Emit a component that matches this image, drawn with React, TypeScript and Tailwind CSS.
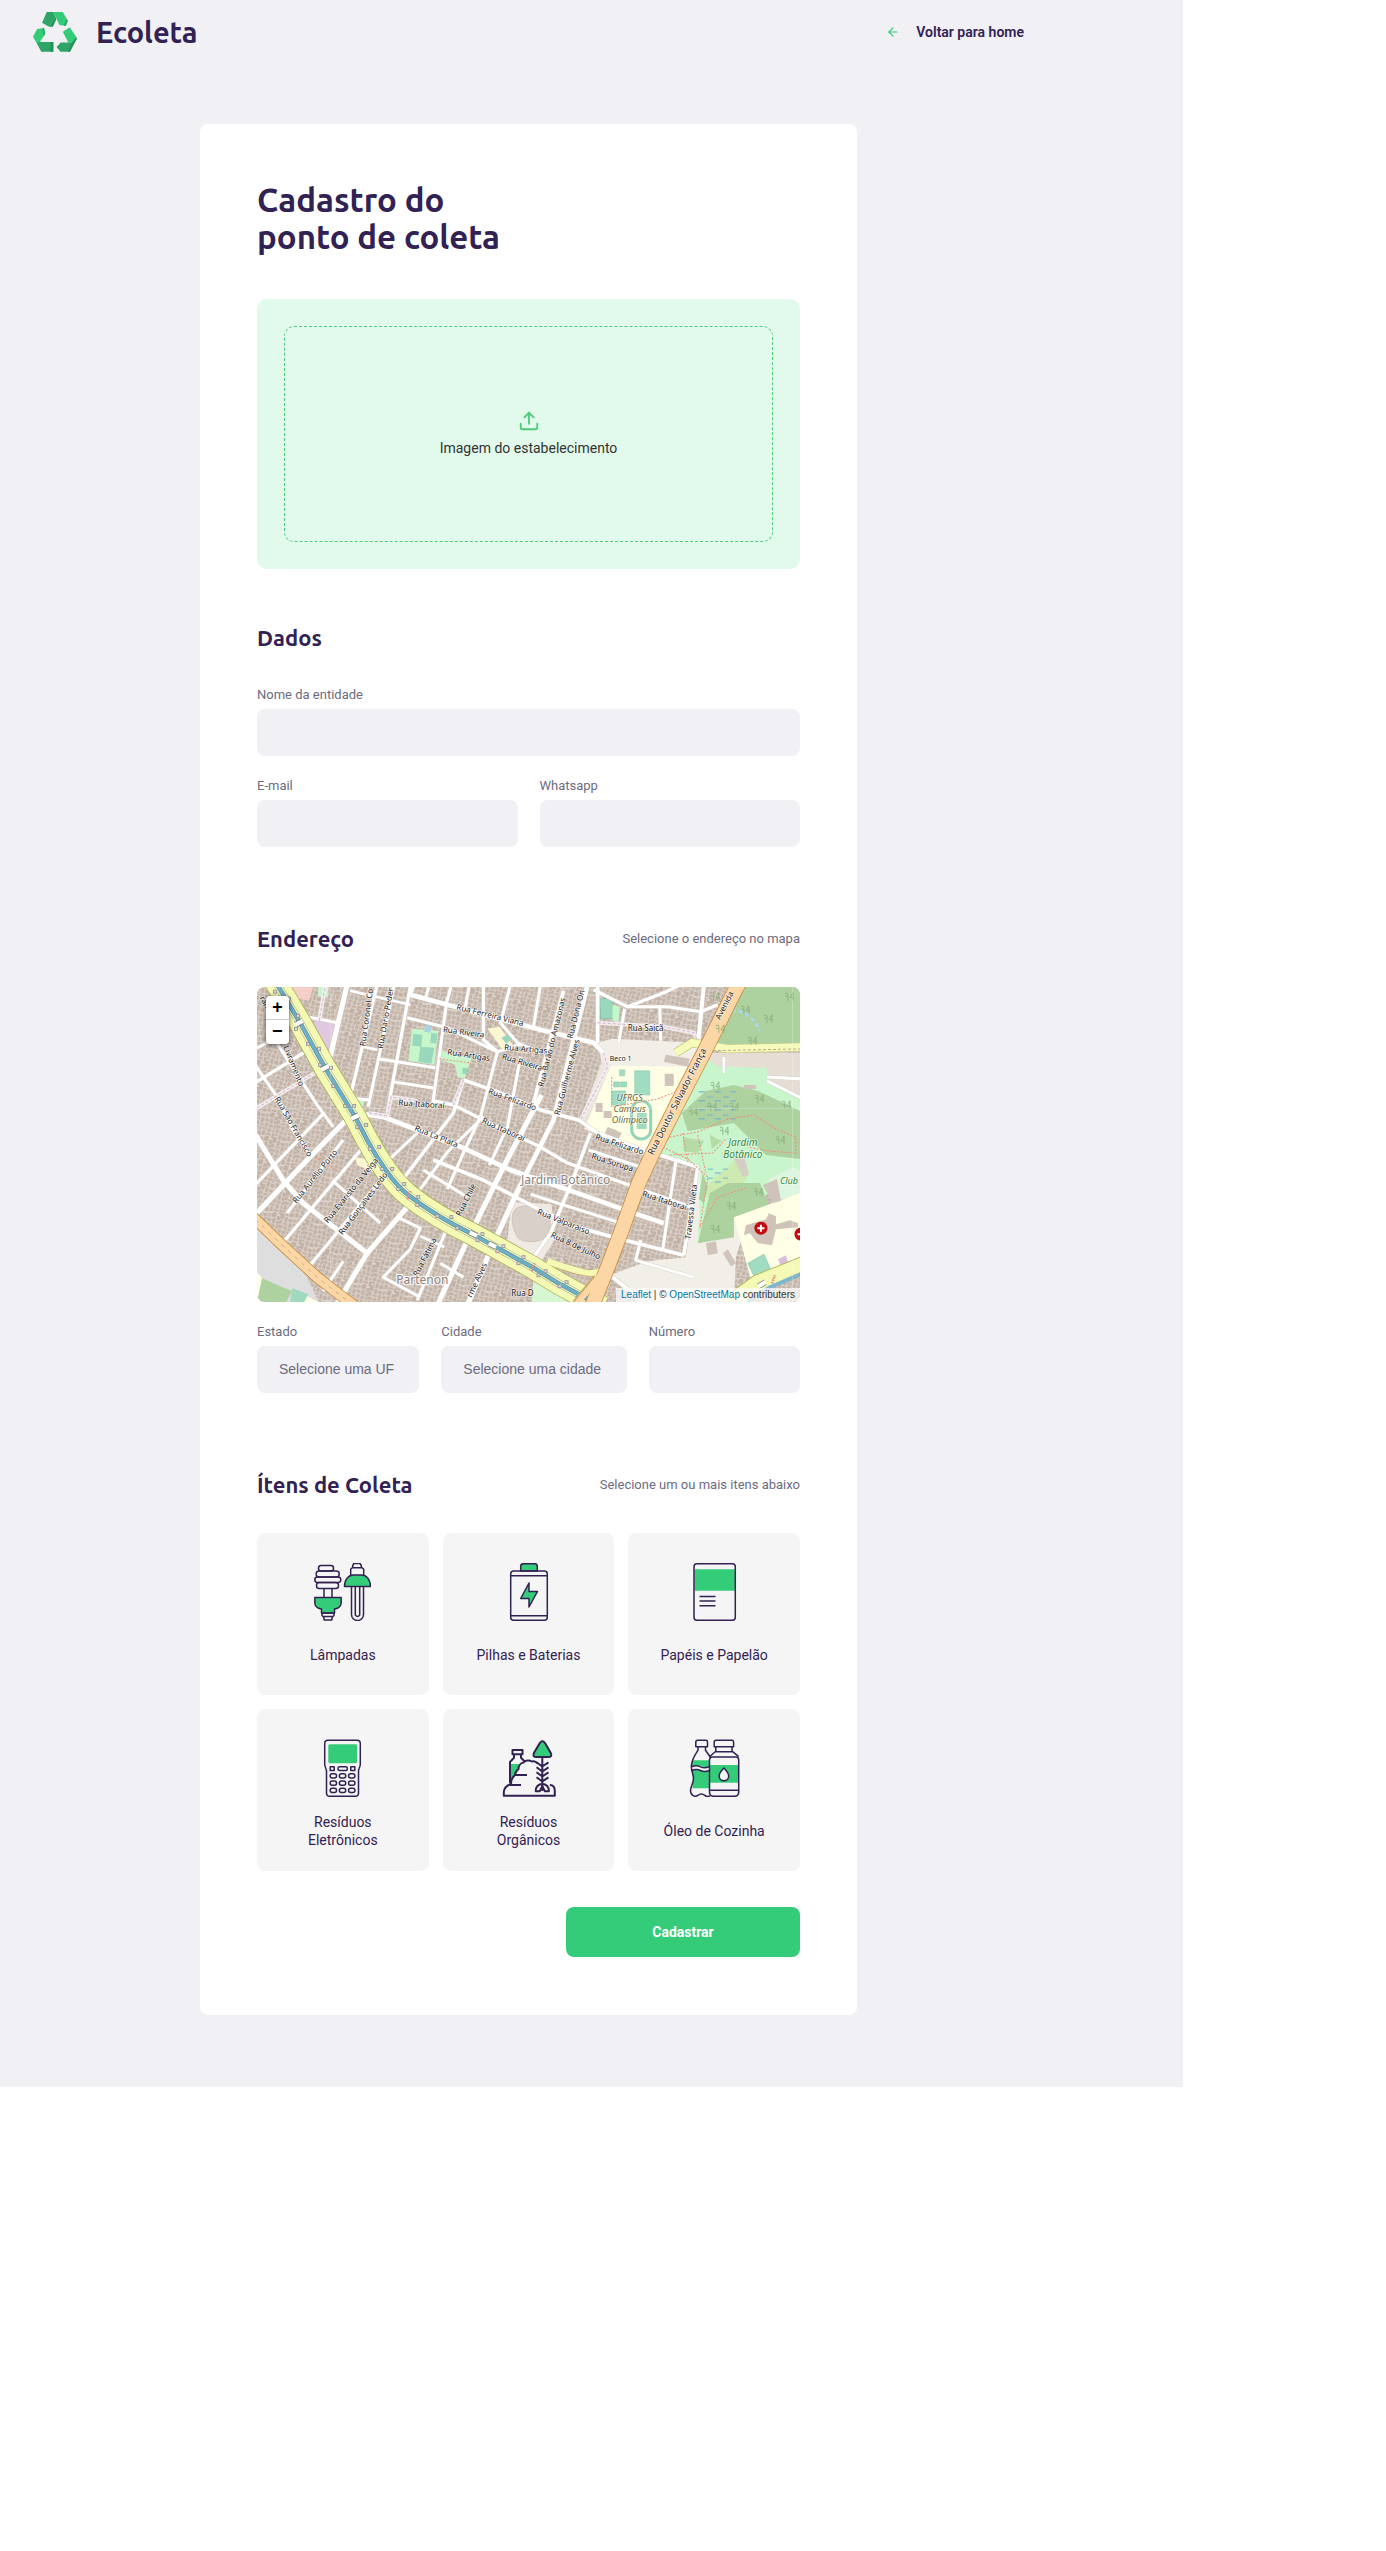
import React from "react";
import { FiArrowLeft, FiUpload } from "react-icons/fi";

const INK = "#322153";
const GREEN = "#34cb79";

function Logo() {
  return (
    <div className="flex items-center gap-[19px]">
      <svg viewBox="0 0 44 40" className="h-10 w-11" aria-hidden="true">
        <path d="M13.7 0H20l2.6 4.7L16 14.7l-6.9-4z" fill="#2ca566" />
        <path d="M20 14.7 16 14.7l6.6-10 .8 2.2z" fill="#249355" />
        <path d="M19.8 0h10l5 8.7-2.2 5.3-6.2-1-3.8-8.3z" fill={GREEN} />
        <path d="M34.8 8.7 32.6 14l-1.6-.3 2.6-6.9z" fill="#2ca566" />
        <path d="m29.8 19.7 7-4.4 6.7 10L38.2 34 35 30z" fill={GREEN} />
        <path d="m23.6 35 4-4.6H35l3.2 1.2 5.3-6.3v2l-6.6 12.4h-9.4z" fill="#2ca566" />
        <path d="m38.2 31.6 5.3-6.3v2l-6.6 12.4h-2z" fill="#249355" />
        <path d="m0 24.7 4.1-7.7 6.9-1 1.2 6-6.4 9.6-1.4 1z" fill={GREEN} />
        <path d="m11 16 1.2 6-1.5 2-1-8z" fill="#2ca566" />
        <path d="M5.3 30h15v9.7H8.3L4.4 32.6z" fill="#2ca566" />
        <path d="M17.3 30h3v9.7h-3z" fill="#249355" />
      </svg>
      <span className="font-[Ubuntu,'Noto_Sans',sans-serif] text-[29px] leading-8 font-bold">Ecoleta</span>
    </div>
  );
}

type Pt = string;

const streets: { d: Pt; w: number }[] = [
  { d: "M153 8 283 43 336 56 346 66", w: 4.5 },
  { d: "M90 -2 73 70", w: 5 },
  { d: "M120 -2 93 110", w: 3.2 },
  { d: "M153 0 136 93 130 126", w: 3.2 },
  { d: "M137 -2 111 120", w: 3 },
  { d: "M190 10 175 120", w: 3 },
  { d: "M93 4 153 18", w: 2.6 },
  { d: "M150 31 190 41 240 65", w: 3 },
  { d: "M106 60 120 63", w: 2.6 },
  { d: "M121 72 178 81", w: 3 },
  { d: "M136 95 176 101", w: 3 },
  { d: "M50 30 80 36", w: 3 },
  { d: "M85 110 112 113", w: 3 },
  { d: "M92 125 126 130 160 143 206 161 253 183 320 206 376 226 406 236", w: 4.6 },
  { d: "M176 114 196 118 226 133 283 160 310 176 385 203 436 221", w: 3.2 },
  { d: "M176 173 226 193 283 223 313 238 356 250 426 268", w: 3.6 },
  { d: "M206 93 240 105 283 123 321 133 340 146 386 163 440 180", w: 3.6 },
  { d: "M331 163 383 180", w: 3 },
  { d: "M273 207 300 216 370 238", w: 3 },
  { d: "M96 126 50 173 -2 228", w: 5 },
  { d: "M-2 147 26 193 46 216 110 266", w: 5 },
  { d: "M-2 78 20 110 36 143 53 168", w: 3 },
  { d: "M-2 96 48 65", w: 3.2 },
  { d: "M-2 62 30 46", w: 3 },
  { d: "M-2 198 66 127", w: 3.2 },
  { d: "M12 44 30 72 60 118 76 140", w: 3 },
  { d: "M30 226 86 153", w: 3 },
  { d: "M28 253 106 160", w: 3.2 },
  { d: "M53 278 126 190", w: 3.2 },
  { d: "M66 304 86 274", w: 3 },
  { d: "M80 316 110 266 150 220 160 208", w: 5 },
  { d: "M75 193 123 236", w: 3 },
  { d: "M126 178 160 146", w: 3 },
  { d: "M142 197 196 126 206 93", w: 3.4 },
  { d: "M160 206 190 165 226 130", w: 3 },
  { d: "M284 108 246 180 210 253 180 318", w: 5 },
  { d: "M262 200 236 256 210 318", w: 5 },
  { d: "M240 65 223 130 206 166 190 202", w: 3 },
  { d: "M263 70 250 140 232 178", w: 3 },
  { d: "M166 183 210 210", w: 3 },
  { d: "M140 230 163 241 153 262 126 290 163 310", w: 3 },
  { d: "M163 249 187 260", w: 2.6 },
  { d: "M190 240 160 313", w: 3 },
  { d: "M183 276 206 290", w: 3 },
  { d: "M172 -2 168 12", w: 3 },
  { d: "M212 -2 208 20", w: 3 },
  { d: "M194 -2 190 14", w: 3 },
  { d: "M226 -2V53L240 65 262 58", w: 3.2 },
  { d: "M253 -2 243 36 260 56 283 66", w: 3 },
  { d: "M153 8 156 -2", w: 4 },
  { d: "M306 4 276 116", w: 3.6 },
  { d: "M330 -2 296 133 262 200", w: 4.6 },
  { d: "M340 -2V56", w: 3.6 },
  { d: "M336 3 370 20 406 6 423 -2", w: 3.2 },
  { d: "M370 20 410 20 443 25 460 18", w: 3.2 },
  { d: "M446 -2 440 60", w: 4 },
  { d: "M367 22 361 56", w: 3 },
  { d: "M402 20 403 54", w: 3 },
  { d: "M283 -2 276 40", w: 3 },
  { d: "M333 146 315 193 293 246 276 270", w: 3.4 },
  { d: "M418 175 405 262", w: 3 },
  { d: "M440 180 426 268", w: 3.4 },
  { d: "M383 253 378 273 436 290", w: 3 },
  { d: "M350 286 383 312", w: 4 },
  { d: "M466 70V86", w: 3 },
  { d: "M509 90 542 92M509 94 545 112", w: 3 },
];

const footpaths: Pt[] = [
  "M340 36 406 40 436 46 443 60",
  "M346 66 350 80 323 133",
  "M0 121 66 81",
  "M62 34 68 0",
  "M112 126 130 129 134 110 160 114",
  "M206 93 196 118",
];

const redPaths: Pt[] = [
  "M354 90V120L400 112 420 104",
  "M398 166 412 150 440 145 470 132 496 128 518 142 538 150 538 166 510 164 490 160",
  "M405 160 430 172 450 190 442 240 460 210 490 200",
  "M425 146 430 175M412 168 455 166 468 152M440 148 448 186",
  "M182 72 213 76 208 92",
  "M58 170 80 184",
];

const roadNames: { t: string; x: number; y: number; r: number; s?: number }[] = [
  { t: "Rua Ferreira Viana", x: 232, y: 31, r: 14 },
  { t: "Rua Riveira", x: 206, y: 48, r: 8 },
  { t: "Rua Artigas", x: 211, y: 71, r: 9 },
  { t: "Rua Artigas", x: 268, y: 65, r: 5 },
  { t: "Rua Riveira", x: 264, y: 78, r: 17 },
  { t: "Rua Coronel Co", x: 112, y: 31, r: -82 },
  { t: "Rua Dario Peder", x: 131, y: 32, r: -80 },
  { t: "Rua Felizardo", x: 254, y: 115, r: 20 },
  { t: "Rua Itaboraí", x: 164, y: 120, r: 4 },
  { t: "Rua Itaboraí", x: 245, y: 145, r: 24 },
  { t: "Rua La Plata", x: 178, y: 152, r: 22 },
  { t: "a Livramento", x: 33, y: 77, r: 68 },
  { t: "rame", x: 7, y: 20, r: 62 },
  { t: "Rua São Francisco", x: 34, y: 141, r: 60 },
  { t: "Rua Aurélio Porto", x: 60, y: 191, r: -51 },
  { t: "Rua Evaristo da Veiga", x: 96, y: 205, r: -51 },
  { t: "Rua Gonçalves Ledo", x: 108, y: 218, r: -53 },
  { t: "Rua Chile", x: 211, y: 214, r: -63 },
  { t: "Rua Fátima", x: 170, y: 271, r: -63 },
  { t: "rme Alves", x: 222, y: 294, r: -65 },
  { t: "Rua D", x: 265, y: 309, r: 0 },
  { t: "Rua Barão do Amazonas", x: 297, y: 56, r: -76 },
  { t: "Rua Dona On", x: 321, y: 28, r: -76 },
  { t: "Rua Guilherme Alves", x: 312, y: 91, r: -75 },
  { t: "Rua Saicã", x: 388, y: 44, r: 0 },
  { t: "Beco 1", x: 363, y: 74, r: 0, s: 7 },
  { t: "Rua Doutor Salvador França", x: 422, y: 116, r: -63, s: 9 },
  { t: "Avenida", x: 469, y: 20, r: -63 },
  { t: "Rua Felizardo", x: 361, y: 160, r: 18 },
  { t: "Rua Surupa", x: 354, y: 178, r: 18 },
  { t: "Rua Itaboraí", x: 406, y: 216, r: 18 },
  { t: "Travessa Vileta", x: 436, y: 225, r: -83 },
  { t: "Rua Valparaíso", x: 305, y: 237, r: 22 },
  { t: "Rua 8 de Julho", x: 317, y: 261, r: 25 },
];

const canalNodes: [number, number][] = [
  [18, 5], [32, 12], [41, 29], [39, 42], [51, 57], [62, 62], [63, 78], [74, 81], [76, 99], [88, 119],
  [97, 119], [100, 140], [109, 138], [113, 162], [122, 160], [125, 182], [135, 182], [141, 202], [147, 197],
  [160, 218], [161, 210], [180, 229], [194, 230], [200, 241], [220, 253], [225, 247], [240, 264], [246, 259],
  [261, 276], [266, 270], [281, 288], [288, 284], [302, 299], [309, 295], [320, 311], [328, 306],
];

const trees: [number, number][] = [
  [457, 10], [487, 23], [510, 32], [531, 10], [494, 54], [462, 42], [457, 99], [435, 125], [454, 120], [476, 120],
  [501, 112], [528, 118], [466, 144], [522, 153], [473, 219], [457, 242], [500, 205],
];

const CANAL = "M14 -12 25 6 43 36 68 81 98 130 110 153C120 172 136 196 151 208 165 219 190 235 215 247L235 258 275 280 301 296 345 320";
const AVENUE = "M486 -12 478 2 461 36 446 66 420 116 395 166 381 196 363 246 350 280 334 320";

function StreetMap() {
  return (
    <svg viewBox="0 0 542 315" preserveAspectRatio="xMidYMid slice" className="block h-full w-full" role="img" aria-label="Mapa do bairro Jardim Botânico">
      <defs>
        <pattern id="roofs" width="26" height="24" patternUnits="userSpaceOnUse" patternTransform="rotate(14)">
          <rect width="26" height="24" fill="#ddd3ca" />
          <path
            d="M0 0h4v3H0zM5 0h3v5H5zM9 1h4v3H9zM14 0h2v4h-2zM17 0h5v3h-5zM23 1h3v4h-3zM0 4h3v4H0zM4 6h5v2H4zM10 5h3v5h-3zM14 5h4v3h-4zM19 4h3v5h-3zM23 6h3v3h-3zM0 9h5v3H0zM6 9h3v4H6zM10 11h4v2h-4zM15 9h3v4h-3zM19 10h4v3h-4zM24 10h2v4h-2zM1 13h3v4H1zM5 14h4v3H5zM10 14h2v4h-2zM13 14h5v2h-5zM19 14h3v4h-3zM23 15h3v2h-3zM0 18h4v2H0zM5 18h3v5H5zM9 19h4v4H9zM14 17h3v5h-3zM18 19h5v2h-5zM24 18h2v5h-2zM0 21h4v3H0zM18 22h4v2h-4z"
            fill="#c2b2a6"
          />
        </pattern>
        <pattern id="marsh" width="16" height="9" patternUnits="userSpaceOnUse">
          <path d="M1 2h6M9 6h6" stroke="#6aaed6" strokeWidth="1" />
        </pattern>
      </defs>
      <rect width="542" height="315" fill="url(#roofs)" />

      {/* open land, campuses and public areas */}
      <path d="M340 56 355 52 440 56 446 66 430 96 345 80z" fill="#f2efe9" />
      <path d="M323 133 345 72 356 80 340 146z" fill="#eae5dd" />
      <path d="m353 79 76 1-36 92-66-30z" fill="#ffffe5" />
      <path d="M440 180 500 200 478 270 476 315 380 315 352 288 390 274 428 270z" fill="#f2efe9" />
      <path d="M445 66H542V120H440z" fill="#e6ddd4" />
      <path d="m448 256 10-2 2 12-10 2zM470 262l8 14-5 3-8-13zM462 238l8-2 2 8-8 2z" fill="#d0c3ba" />
      <path d="M0 238 22 258 50 290 62 315H0z" fill="#dedede" />
      <path d="M0 285 10 296 8 315H0zM42 305 62 315H40z" fill="#ffffe5" />
      <path d="m5 291 30 13-6 11H0z" fill="#aed1a0" />
      <path d="m35 301 16 6-4 8H33z" fill="#9fd9c0" />
      <path d="M56 33 80 37 70 66 62 64z" fill="#e0c8de" />
      <path d="M22 0H56L52 14 30 10z" fill="#f6cfc9" />
      <path d="M61 0h10v10H61zM98 113h10l-3 8-8-3z" fill="#c5f7cb" />
      <path d="m155 42 26 2-4 34-26-4z" fill="#c5f7cb" />
      <path d="m156 47 9 1-1 12-9-1zM174 46l6 1-1 10-6-1zM163 60l14 1-3 16-13-2z" fill="#9ad8bd" />
      <path d="m168 38 6 1-1 7-6-1z" fill="#a6d4e4" />
      <path d="M184 64 214 72 208 92 200 90 198 78 183 73z" fill="#c5f7cb" />
      <path d="M205 81h7v6h-7z" fill="#9ad8bd" />
      <path d="M230 42 242 40 258 62 246 64z" fill="#fbf7d3" />
      <path d="m244 51 6-3 4 4-5 5z" fill="#9ad8bd" />
      <path d="M98 170 110 172 118 186 100 178z" fill="#fbf7d3" />
      <path d="m254 215 40 2 4 34-16 26-34-6z" fill="#efeae3" />
      <path d="M258 222c8-6 22-4 32 6 4 4 4 18-2 22-6 6-24 6-28 0-5-8-8-22-2-28z" fill="#d9d0c9" stroke="#c5b9af" strokeWidth=".6" />
      <path d="M342 12h13l2 20h-14z" fill="#9ad8bd" stroke="#6fb99b" strokeWidth=".6" />
      <path d="m355 18 7 2-1 15-6-1z" fill="#c5f7cb" />
      <path d="M276 293 283 290 312 315H274z" fill="#d7f7d3" />

      {/* parks */}
      <path d="M482 0H542V60H440L466 38z" fill="#aed1a0" />
      <path d="M444 68 460 80 509 81 509 94 542 112V196L515 202 500 216 440 256 443 182 396 166 420 118z" fill="#c8f5cb" />
      <path d="M448 104 476 98 500 104 542 124V172L508 168 476 136 430 144 424 126z" fill="#aed1a0" />
      <path d="M448 200 478 172 492 184 486 196 462 214 446 208z" fill="#cdebb0" />
      <path d="M452 206 470 196 502 196 512 220 476 230 476 250 440 256z" fill="#aed1a0" />
      <path d="M445 186 450 200 446 216 441 212z" fill="#aed1a0" />
      <path d="M425 150 446 154 440 166 426 164zM452 148 464 154 454 162z" fill="#b5dca5" />
      <rect x="440" y="104" width="38" height="32" fill="url(#marsh)" />
      <rect x="450" y="178" width="20" height="20" fill="url(#marsh)" />
      <path d="M476 172 486 168 491 188 485 190z" fill="#d6cdc6" />
      <path d="M510 192 536 180 542 184V208L516 214z" fill="#dcf6e0" />
      <path d="M476 230 542 206V278L494 296z" fill="#ffffe5" />
      <path d="m488 238 20-6 3-6 7 3v8l14-4 8 3v4l-22 2-4 16-14-2-8-10-6 2z" fill="#d0c3ba" />
      <path d="m490 276 16-9 8 18-16 8z" fill="#9fdcc2" stroke="#79c3a4" strokeWidth=".6" />
      <path d="m520 272 8-4 2 7-7 4z" fill="#d9bfdd" />
      <path d="M505 198l14-6 4 22-8 2zM486 98h12v4h-12z" fill="#cfc4bb" />

      {/* campus buildings */}
      <path d="M377 84h15v24h-15zM362 83h5v6h-5zM356 95h6v5h-6zM363 95h6v5h-6zM354 104h14v14h-14z" fill="#9fdcc2" stroke="#7cc7a8" strokeWidth=".5" />
      <rect x="374" y="114" width="19" height="38" rx="9.500" fill="none" stroke="#93d5ba" strokeWidth="3" />
      <rect x="379" y="126" width="10" height="16" fill="#9fdcc2" />
      <path d="M407 87h9v12h-9zM338 116h7v9h-7zM346 124h8v7h-8zM350 140l8 3-4 8-7-4zM408 68l24 4-2 8-24-5zM356 142l8 4-3 6-7-3z" fill="#d0c3ba" />

      {/* streets */}
      {streets.map((s, i) => (
        <path key={"c" + i} d={s.d} fill="none" stroke="#cfc9c3" strokeWidth={s.w + 0.8} strokeLinejoin="round" />
      ))}
      {streets.map((s, i) => (
        <path key={"s" + i} d={s.d} fill="none" stroke="#ffffff" strokeWidth={s.w} strokeLinejoin="round" />
      ))}
      {footpaths.map((d, i) => (
        <g key={i} fill="none">
          <path d={d} stroke="#f3edf0" strokeWidth="4" />
          <path d={d} stroke="#cfb9c8" strokeWidth="1" strokeDasharray="3 2" />
        </g>
      ))}
      {redPaths.map((d, i) => (
        <path key={i} d={d} fill="none" stroke="#f58a7c" strokeWidth="1" strokeDasharray="2 1.500" />
      ))}
      <path d="M474 24C486 22 498 34 502 44" fill="none" stroke="#a8d8ea" strokeWidth="3" strokeDasharray="4 3" />

      {/* canal avenue */}
      <g fill="none" strokeLinejoin="round">
        <path d="M418 66 434 56 470 62 545 60" stroke="#c9cc84" strokeWidth="9" />
        <path d="M418 66 434 56 470 62 545 60" stroke="#f6fabb" strokeWidth="7.500" />
        <path d="M450 64 545 62" stroke="#b9a98e" strokeWidth="1" strokeDasharray="3 2" />
        <path d="M470 318 500 296 545 278" stroke="#b5ba66" strokeWidth="18" />
        <path d="M470 318 500 296 545 278" stroke="#f4f9b4" strokeWidth="16" />
        <path d="M490 314 512 300 545 286" stroke="#7fb6cc" strokeWidth="4" />
        <path d={CANAL} stroke="#a9af55" strokeWidth="23" />
        <path d={CANAL} stroke="#f4f9b4" strokeWidth="21.500" />
        <path d={CANAL} stroke="#a9a9a0" strokeWidth="8" />
        <path d={CANAL} stroke="#f4f9b4" strokeWidth="7" />
        <path d={CANAL} stroke="#5d8798" strokeWidth="4.400" />
        <path d={CANAL} stroke="#6cafc9" strokeWidth="3.200" />
      </g>
      {canalNodes.map(([x, y], i) => (
        <rect key={i} x={x - 1.5} y={y - 1.5} width="3" height="3" fill="#dcdcd6" stroke="#8f8f95" strokeWidth=".8" />
      ))}
      {([[42, 36, -28], [68, 81, -28], [98, 130, -25], [216, 247, 26], [235, 258, 26], [504, 297, -30]] as const).map(([x, y, r], i) => (
        <g key={i} transform={`translate(${x} ${y}) rotate(${r})`}>
          <rect x="-4" y="-2.500" width="8" height="5" fill="#fff" />
          <path d="M-4 -2.500h8M-4 2.500h8" stroke="#555" strokeWidth=".6" />
        </g>
      ))}
      {([[151, 208], [275, 280], [515, 292]] as const).map(([x, y], i) => (
        <path key={i} d={`M${x - 1} ${y + 4}l3 -8`} stroke="#e58b83" strokeWidth="2.500" strokeDasharray="1.500 1" />
      ))}

      {/* trunk roads */}
      <g fill="none" strokeLinejoin="round">
        <path d="M352 262C348 284 338 290 318 316M346 282C335 290 320 284 300 278" stroke="#c8ab67" strokeWidth="7" />
        <path d="M346 282C335 290 320 284 290 274" stroke="#f4f9b4" strokeWidth="6" />
        <path d="M-8 226 23 256 60 290 104 324" stroke="#c08a3c" strokeWidth="11.500" />
        <path d="M-8 226 23 256 60 290 104 324" stroke="#fcd6a4" strokeWidth="10" />
        <path d="M-8 226 23 256 60 290 104 324" stroke="#c3a27c" strokeWidth=".8" strokeDasharray="4 5" />
        <path d={AVENUE} stroke="#c08a3c" strokeWidth="15.500" />
        <path d="M354 262C350 284 340 290 318 318" stroke="#fcd6a4" strokeWidth="6" />
        <path d={AVENUE} stroke="#fcd6a4" strokeWidth="14" />
      </g>

      {trees.map(([x, y], i) => (
        <path key={i} d={`M${x - 4} ${y - 3}q3 -2 3 1t-3 1M${x - 1} ${y - 1}v5M${x + 4} ${y + 4}v-8l-3 5h4`} fill="none" stroke="#86ac7a" strokeWidth=".8" />
      ))}
      <path d="M73.500 0V315M303.500 0V315M534.500 0V315M0 121.500H542" stroke="#fff" strokeOpacity=".35" strokeWidth=".7" />

      <g fontFamily="'Noto Sans', sans-serif" textAnchor="middle" paintOrder="stroke" strokeLinejoin="round">
        <g fill="#1c1c1c" stroke="#ffffff" strokeOpacity=".7" strokeWidth="1.500">
          {roadNames.map((n, i) => (
            <text key={i} x={n.x} y={n.y} transform={`rotate(${n.r} ${n.x} ${n.y})`} fontSize={n.s ?? 8}>
              {n.t}
            </text>
          ))}
        </g>
        <g fill="#6e6432" fontSize="9" fontStyle="italic" stroke="#fff" strokeOpacity=".6" strokeWidth="1.500">
          <text x="372" y="114">UFRGS</text>
          <text x="372" y="125">Campus</text>
          <text x="372" y="136">Olímpico</text>
        </g>
        <g fill="#338a3a" fontSize="10" fontStyle="italic" stroke="#fff" strokeOpacity=".6" strokeWidth="1.500">
          <text x="485" y="159">Jardim</text>
          <text x="485" y="171">Botânico</text>
          <text x="531" y="197" fontSize="9">Club</text>
        </g>
        <g fill="#8b8783" fontSize="12" stroke="#fff" strokeOpacity=".8" strokeWidth="2.500">
          <text x="308" y="197">Jardim Botânico</text>
          <text x="165" y="297">Partenon</text>
        </g>
      </g>

      {[503, 543].map((x, i) => (
        <g key={x} transform={`translate(${x} ${241 + i * 6})`}>
          <circle r="6.500" fill="#c4080f" />
          <path d="M-3.500 0h7M0 -3.500v7" stroke="#fff" strokeWidth="2" />
        </g>
      ))}
    </svg>
  );
}

function Icon({ children }: { children: React.ReactNode }) {
  return (
    <svg viewBox="0 0 57 58" className="h-[58px] w-[57px] shrink-0" fill="none" stroke={INK} strokeWidth="1.500" strokeLinejoin="round" aria-hidden="true">
      {children}
    </svg>
  );
}

const items: { label: string; icon: React.ReactNode }[] = [
  {
    label: "Lâmpadas",
    icon: (
      <Icon>
        <rect x="4.500" y="2.500" width="15" height="5.500" rx="2.500" />
        <rect x="2.200" y="8" width="23" height="6" rx="2.800" />
        <rect x=".8" y="14" width="26" height="5.500" rx="2.700" />
        <rect x="2.500" y="19.500" width="22" height="6" rx="2.800" />
        <path d="M10 25.500v9M18 25.500v9" />
        <path d="M.8 34.500h26.400v5c0 4-2.700 6-6.700 6.500v4h-13v-4C3.500 45.500.8 43.500.8 39.500z" fill={GREEN} />
        <path d="M8 50h12v2.500l-1 1H9l-1-1zM9.500 53.500l.8 3.500h7.400l.8-3.500" />
        <path d="M38.700 4.700V2.500l1.300-2h6l1.300 2v2.200zM36.700 12V6.200l1.500-1.500h10l1.500 1.500V12" />
        <path d="M30.500 23.500c0-7 4-11.500 9-11.500h8c5 0 9 4.500 9 11.500z" fill={GREEN} />
        <path d="M37.500 23.500v28a6 6 0 0 0 12 0v-28M41.300 23.500v28.500q2.200 3 4.400 0V23.500" />
      </Icon>
    ),
  },
  {
    label: "Pilhas e Baterias",
    icon: (
      <Icon>
        <path d="M20.700 8V3.500q0-2.800 2.800-2.800h11q2.800 0 2.800 2.800V8z" fill={GREEN} />
        <rect x="10.700" y="8" width="36.600" height="49.300" rx="3" />
        <path d="M11 12.700h36M11 52.700h36" />
        <path d="M29 20v8.500h8.500L29 44v-8.500h-8.300z" fill={GREEN} />
      </Icon>
    ),
  },
  {
    label: "Papéis e Papelão",
    icon: (
      <Icon>
        <path d="M8.500 6.300H49v21.500H8.500z" fill={GREEN} stroke="none" />
        <rect x="8" y=".8" width="41.300" height="56.500" rx="3" />
        <path d="M13.500 33.500h16M13.500 38h16M13.500 42.700h16" />
      </Icon>
    ),
  },
  {
    label: "Resíduos Eletrônicos",
    icon: (
      <Icon>
        <path d="M14 1.300h29q3.300 0 3.300 3.300v20.600q0 1.800-1.300 4.600-.5 1-.5 2.200v22q0 3.300-3.300 3.300H15.800q-3.300 0-3.300-3.300V32q0-1.200-.5-2.200-1.300-2.800-1.300-4.600V4.600Q10.700 1.300 14 1.300z" />
        <rect x="14.300" y="5.300" width="28.700" height="19" rx="1.500" fill={GREEN} stroke="none" />
        <path d="M16.200 27.700h4v3.800h-4zM36.800 27.700h4v3.800h-4z" />
        <rect x="24" y="27.700" width="9.300" height="3.800" rx="1.500" />
        {[34.7, 42, 49.3].map((y) => (
          <g key={y}>
            <rect x="16.200" y={y} width="6.300" height="4.300" rx="2" />
            <rect x="25.400" y={y} width="6.300" height="4.300" rx="2" />
            <rect x="34.600" y={y} width="6.300" height="4.300" rx="2" />
          </g>
        ))}
      </Icon>
    ),
  },
  {
    label: "Resíduos Orgânicos",
    icon: (
      <Icon>
        <path d="M11 25h9l-3 8-2.500 4-3.500 3z" fill={GREEN} stroke="none" />
        <g strokeWidth="2">
          <path d="M12.500 11h10v4.300h-10zM14 15.300v3.500L10 23v21M21 15.300v3.500l3.500 3.500" />
          <path d="M37.500 24.500c-1.500-2-3-3-5.500-2-2.500-1.500-7-1.500-8.500 1-3 .5-5 3.500-5 6.500-2.500 2-3.500 4-3.500 6-2.500 2-4 6-4 9-4 1.500-7 4.500-7.200 8v3.700h51V52c0-4-2-6-5-6M15 36h12M10 46h11" />
          <path d="M42.300 18v34M36.500 23.300l5.800 4.200 6.200-4.200M36.500 28.300l5.800 4.200 6.200-4.200M36.500 33.300l5.800 4.200 6.200-4.200M36.500 38.300l5.800 4.200 6.200-4.200" />
          <path d="M42.300 45c-4 0-6.800 3-6.600 7.300h4l2.600-5 2.600 5h4c.2-4.300-2.600-7.300-6.600-7.300z" />
          <path d="M39.800 4q2.600-3.300 5.200 0l5.800 10q1.600 4-2.300 4H36.200q-3.900 0-2.300-4z" fill={GREEN} />
        </g>
      </Icon>
    ),
  },
  {
    label: "Óleo de Cozinha",
    icon: (
      <Icon>
        <path d="M6.300 21.300H23v6.200q-4 2-7 0-4-2-10.500 0zM5.500 31.500q5-2 9 0 4 2 8.500 0v17.800H6.300L7.500 41z" fill={GREEN} stroke="none" />
        <path d="M9.800 7.700V3q0-1.700 1.700-1.700h8.300q1.700 0 1.700 1.700v4.700zM12 7.700v3.500C9 16 6 20 5.500 26c-.8 6 2 8 2 13.500 0 5-3 8-3 12 0 5 4.500 7 7.300 4.800 2.500-2 4.500-2 7 0 1.800 1.400 4 1.200 5.200.7M19.500 7.700v3.500l5 7" />
        <path d="M5.500 27.800q5-2 9 0 4 2 8.500 0M5.500 31.500q5-2 9 0 4 2 8.500 0" />
        <path d="M28.200 7.700V3q0-1.700 1.700-1.700h16q1.700 0 1.700 1.700v4.700zM29.800 7.700v4.500l-6.300 5.500M46 7.700v4.500l6.700 5.500M30 12.800h16" />
        <rect x="24" y="26" width="28.300" height="17.700" fill={GREEN} stroke="none" />
        <path d="M23.500 21q0-3 3-3h23.200q3 0 3 3v32q0 4.300-4.300 4.300H27.800q-4.300 0-4.300-4.300zM23.500 51.300h29" />
        <path d="M37.900 29q4.800 5 4.800 8a4.800 4.800 0 0 1-9.600 0q0-3 4.800-8z" fill="#f5f5f5" />
      </Icon>
    ),
  },
];

const label = "mb-[5px] block text-[13px] leading-[18px] text-[#6c6c80]";
const field =
  "block h-[47px] w-full min-w-0 appearance-none rounded-lg border-0 bg-[#f0f0f5] px-[22px] font-['Liberation_Sans',Arial,sans-serif] text-[14px] text-[#6c6c80] outline-none";

function SectionTitle({ title, hint }: { title: string; hint?: string }) {
  return (
    <div className="mb-9 flex items-center justify-between gap-4">
      <h2 className="font-[Ubuntu,'Noto_Sans',sans-serif] text-[22px] leading-6 font-bold">{title}</h2>
      {hint && <span className="text-[13px] leading-6 text-[#6c6c80]">{hint}</span>}
    </div>
  );
}

function TextField({ id, name, type = "text" }: { id: string; name: string; type?: string }) {
  return (
    <div>
      <label htmlFor={id} className={label}>{name}</label>
      <input id={id} type={type} className={field} />
    </div>
  );
}

function SelectField({ id, name, placeholder }: { id: string; name: string; placeholder: string }) {
  return (
    <div>
      <label htmlFor={id} className={label}>{name}</label>
      <select id={id} className={field} defaultValue="">
        <option value="">{placeholder}</option>
      </select>
    </div>
  );
}

export default function App() {
  return (
    <div className="w-full max-w-[1183px] bg-[#f0f0f5] pb-[72px] font-[Roboto,sans-serif] text-[#322153] antialiased">
      <div className="max-w-[1057px]">
        <header className="flex h-16 items-center justify-between px-[33px]">
          <Logo />
          <a href="#home" className="flex items-center gap-4 text-[14px] leading-5 font-semibold">
            <FiArrowLeft size={14} color={GREEN} aria-hidden="true" />
            Voltar para home
          </a>
        </header>

        <main className="mx-auto mt-[60px] max-w-[657px] rounded-lg bg-white px-[57px] pt-[57px] pb-[58px]">
          <form onSubmit={(e) => e.preventDefault()}>
            <h1 className="mb-11 font-[Ubuntu,'Noto_Sans',sans-serif] text-[33px] leading-[37px] font-bold">
              Cadastro do
              <br />
              ponto de coleta
            </h1>

            <label className="block cursor-pointer rounded-[10px] bg-[#e1faec] p-[27px]">
              <input type="file" accept="image/*" className="sr-only" />
              <span className="flex h-[216px] flex-col items-center justify-center gap-1.5 rounded-[10px] border border-dashed border-[#4ecb79] text-[14px] leading-5 text-[#333333]">
                <FiUpload size={22} color="#4ecb79" aria-hidden="true" />
                Imagem do estabelecimento
              </span>
            </label>

            <section className="mt-[57px]">
              <SectionTitle title="Dados" />
              <div className="flex flex-col gap-[21px]">
                <TextField id="name" name="Nome da entidade" />
                <div className="grid grid-cols-2 gap-[22px]">
                  <TextField id="email" name="E-mail" type="email" />
                  <TextField id="whatsapp" name="Whatsapp" />
                </div>
              </div>
            </section>

            <section className="mt-20">
              <SectionTitle title="Endereço" hint="Selecione o endereço no mapa" />
              <div className="relative mb-[21px] h-[315px] overflow-hidden rounded-lg bg-[#dddddd]">
                <StreetMap />
                <div className="absolute top-[9px] left-[9px] flex w-[23px] flex-col divide-y divide-[#cccccc] overflow-hidden rounded bg-white font-['Liberation_Mono',monospace] text-[18px] font-bold text-black shadow-[0_1px_5px_rgba(0,0,0,0.65)]">
                  <button type="button" aria-label="Aproximar" className="h-6 leading-6">+</button>
                  <button type="button" aria-label="Afastar" className="h-6 leading-6">−</button>
                </div>
                <div className="absolute right-0 bottom-0 bg-white/70 px-[5px] font-['Liberation_Sans',Arial,sans-serif] text-[10px] leading-[14px] whitespace-nowrap text-[#333333]">
                  <a href="#leaflet" className="text-[#0078a8]">Leaflet</a> | ©{" "}
                  <a href="#osm" className="text-[#0078a8]">OpenStreetMap</a> contributers
                </div>
              </div>
              <div className="grid grid-cols-[162fr_185fr_151fr] gap-[22px]">
                <SelectField id="uf" name="Estado" placeholder="Selecione uma UF" />
                <SelectField id="city" name="Cidade" placeholder="Selecione uma cidade" />
                <TextField id="number" name="Número" />
              </div>
            </section>

            <section className="mt-20">
              <SectionTitle title="Ítens de Coleta" hint="Selecione um ou mais itens abaixo" />
              <ul className="grid grid-cols-3 gap-[14px]">
                {items.map((item) => (
                  <li key={item.label}>
                    <button type="button" className="flex h-[162px] w-full flex-col items-center rounded-lg bg-[#f5f5f5] px-8 pt-[30px] pb-4">
                      {item.icon}
                      <span className="mt-[10px] flex flex-1 items-center text-center text-[14px] leading-[18px]">
                        {item.label}
                      </span>
                    </button>
                  </li>
                ))}
              </ul>
            </section>

            <div className="mt-9 flex justify-end">
              <button type="submit" className="h-[50px] w-[234px] rounded-lg bg-[#34cb79] text-[14px] font-bold text-white">
                Cadastrar
              </button>
            </div>
          </form>
        </main>
      </div>
    </div>
  );
}
